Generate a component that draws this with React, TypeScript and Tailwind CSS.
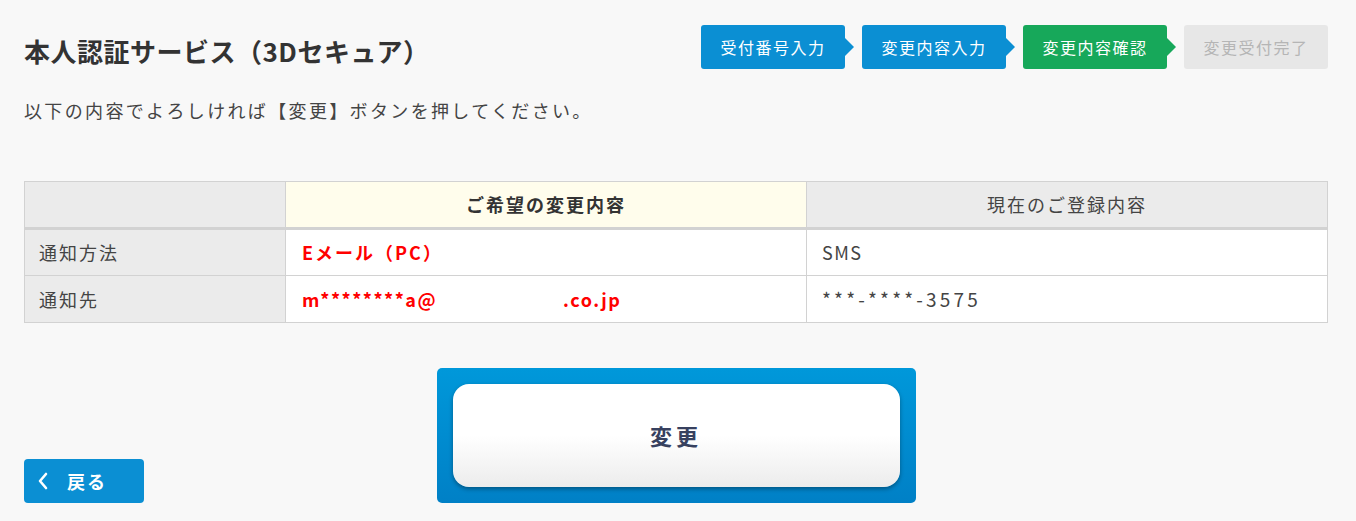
import React from "react";

const font = { fontFamily: '"Noto Sans CJK JP", "Noto Sans", sans-serif' };

function Arrow({ color }: { color: string }) {
  return (
    <svg width="9" height="18" viewBox="0 0 9 18" className="block">
      <path d="M0 0 L9 9 L0 18 Z" fill={color} />
    </svg>
  );
}

function Step({ label, bg, text, arrow }: { label: string; bg: string; text: string; arrow?: string }) {
  return (
    <div className="flex items-center">
      <div
        className={`flex h-[44px] w-[144px] items-center justify-center rounded-[3px] text-[16px] tracking-[1.5px] ${bg} ${text}`}
      >
        {label}
      </div>
      {arrow ? (
        <div className="mr-[8px]">
          <Arrow color={arrow} />
        </div>
      ) : null}
    </div>
  );
}

export default function App() {
  return (
    <div className="min-h-[521px] bg-[#f8f8f8] pl-[24px] pr-[28px] text-[#333]" style={font}>
      <div className="flex items-start justify-between pt-[25px]">
        <h1 className="mt-[9px] text-[26px] font-bold leading-[34px] tracking-[0.5px] text-[#333]">
          本人認証サービス（3Dセキュア）
        </h1>
        <div className="flex">
          <Step label="受付番号入力" bg="bg-[#0b8fd3]" text="text-white" arrow="#0b8fd3" />
          <Step label="変更内容入力" bg="bg-[#0b8fd3]" text="text-white" arrow="#0b8fd3" />
          <Step label="変更内容確認" bg="bg-[#17a85a]" text="text-white" arrow="#17a85a" />
          <Step label="変更受付完了" bg="bg-[#e7e7e7]" text="text-[#b5b5b5]" />
        </div>
      </div>

      <p className="mt-[28px] text-[18px] leading-[26px] tracking-[2.35px] text-[#444]">
        以下の内容でよろしければ【変更】ボタンを押してください。
      </p>

      <table className="mt-[58px] w-full table-fixed border-collapse text-[18px] tracking-[2px]">
        <colgroup>
          <col className="w-[261px]" />
          <col className="w-[521px]" />
          <col />
        </colgroup>
        <thead>
          <tr className="h-[47px]">
            <th className="border border-b-[3px] border-[#d2d2d2] bg-[#ebebeb]"></th>
            <th className="border border-b-[3px] border-[#d2d2d2] bg-[#fffdec] text-center font-bold text-[#333]">
              ご希望の変更内容
            </th>
            <th className="border border-b-[3px] border-[#d2d2d2] bg-[#ebebeb] text-center font-normal text-[#444]">
              現在のご登録内容
            </th>
          </tr>
        </thead>
        <tbody>
          <tr className="h-[47px]">
            <td className="border border-[#d2d2d2] bg-[#ebebeb] pl-[14px] text-[#444]">通知方法</td>
            <td className="border border-[#d2d2d2] bg-white pl-[16px] font-bold text-[#ff0000]">Eメール（PC）</td>
            <td className="border border-[#d2d2d2] bg-white pl-[15px] tracking-[1.5px] text-[#444]">SMS</td>
          </tr>
          <tr className="h-[47px]">
            <td className="border border-[#d2d2d2] bg-[#ebebeb] pl-[14px] text-[#444]">通知先</td>
            <td className="border border-[#d2d2d2] bg-white pl-[16px] font-bold tracking-[1.5px] text-[#ff0000]">
              <span>m********a@</span>
              <span className="ml-[126px]">.co.jp</span>
            </td>
            <td className="border border-[#d2d2d2] bg-white pl-[15px] text-[19px] tracking-[3.2px] text-[#444]">
              ***-****-3575
            </td>
          </tr>
        </tbody>
      </table>

      <div className="mt-[45px] flex items-end">
        <div className="flex-1">
          <button className="flex h-[44px] w-[120px] items-center rounded-[4px] bg-[#0b8fd3] pl-[13px] text-white">
            <svg width="12" height="18" viewBox="0 0 12 18" className="block">
              <path d="M9 2 L3 9 L9 16" fill="none" stroke="white" strokeWidth="2.6" strokeLinecap="round" strokeLinejoin="round" />
            </svg>
            <span className="ml-[18px] text-[18px] font-bold tracking-[2px]">戻る</span>
          </button>
        </div>
        <div className="h-[135px] w-[479px] rounded-[5px] bg-gradient-to-b from-[#0098da] to-[#0080c6] p-[16px]">
          <button className="flex h-full w-full items-center justify-center rounded-[16px] bg-gradient-to-b from-white via-white to-[#ececec] text-[22px] font-bold tracking-[4px] text-[#37415f] shadow-[0_2px_4px_rgba(0,0,0,0.35)]">
            変更
          </button>
        </div>
        <div className="flex-1"></div>
      </div>
    </div>
  );
}
